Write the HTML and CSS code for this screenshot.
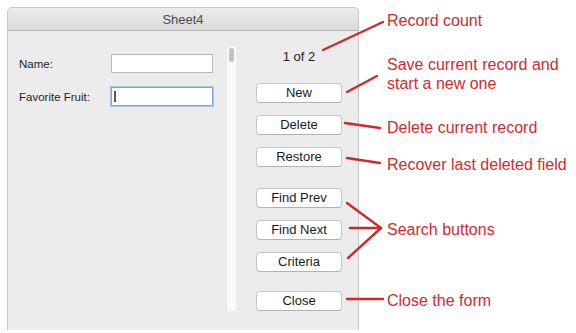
FILE: index.html
```html
<!DOCTYPE html>
<html>
<head>
<meta charset="utf-8">
<link rel="stylesheet" href="styles.css">
</head>
<body>
<div class="page">
  <div class="window">
    <div class="titlebar">Sheet4</div>
    <div class="content">
      <div class="form">
        <label class="label">Name:</label>
        <div class="input"></div>
        <label class="label">Favorite Fruit:</label>
        <div class="input focused"><span class="caret"></span></div>
      </div>
      <div class="scroll"><div class="thumb"></div></div>
      <div class="actions">
        <div class="count">1 of 2</div>
        <div class="group first">
          <div class="btn">New</div>
          <div class="btn">Delete</div>
          <div class="btn">Restore</div>
        </div>
        <div class="group">
          <div class="btn">Find Prev</div>
          <div class="btn">Find Next</div>
          <div class="btn">Criteria</div>
        </div>
        <div class="group last">
          <div class="btn">Close</div>
        </div>
      </div>
    </div>
  </div>

  <svg class="arrows" width="576" height="333" viewBox="0 0 576 333">
    <g stroke="#cf2a2a" stroke-width="2.4" stroke-linecap="round" fill="none">
      <line x1="323" y1="50" x2="383" y2="22"/>
      <line x1="347" y1="92" x2="377" y2="76"/>
      <line x1="345" y1="123" x2="380" y2="128"/>
      <line x1="347" y1="158" x2="380" y2="163"/>
      <line x1="347" y1="203" x2="381" y2="228"/>
      <line x1="350" y1="228" x2="381" y2="228"/>
      <line x1="348" y1="258" x2="381" y2="228"/>
      <line x1="347" y1="299" x2="383" y2="299"/>
    </g>
  </svg>

  <div class="note n1">Record count</div>
  <div class="note n2">Save current record and<br>start a new one</div>
  <div class="note n3">Delete current record</div>
  <div class="note n4">Recover last deleted field</div>
  <div class="note n5">Search buttons</div>
  <div class="note n6">Close the form</div>
</div>
</body>
</html>
```

FILE: styles.css
```css
html, body {
  margin: 0;
  padding: 0;
  background: #ffffff;
}
.page {
  position: relative;
  width: 576px;
  height: 333px;
  overflow: hidden;
  font-family: "Liberation Sans", Arial, sans-serif;
}
.window {
  margin: 7px 0 0 7px;
  width: 352px;
  height: 323px;
  box-sizing: border-box;
  border: 1px solid #c8c8c8;
  border-bottom: none;
  border-radius: 5px 5px 0 0;
  background: #ececec;
  display: flex;
  flex-direction: column;
  overflow: hidden;
}
.titlebar {
  height: 21px;
  flex: none;
  border-bottom: 1px solid #b7b7b7;
  background: linear-gradient(#ececec, #dadada);
  display: flex;
  align-items: center;
  justify-content: center;
  font-size: 13px;
  color: #4c4c4c;
  padding-top: 1px;
  box-sizing: content-box;
}
.content {
  flex: 1;
  display: flex;
}
.form {
  width: 207px;
  padding: 23px 0 0 11px;
  display: grid;
  grid-template-columns: 92px 102px;
  grid-auto-rows: 19px;
  row-gap: 14px;
  align-content: start;
  align-items: center;
}
.label {
  font-size: 11.5px;
  color: #1e1e1e;
}
.input {
  height: 19px;
  box-sizing: border-box;
  border: 1px solid #b9b9b9;
  background: #ffffff;
  position: relative;
}
.input.focused {
  border: 1px solid #7fa6dc;
  box-shadow: 0 0 0 1px #a9c5ec;
}
.caret {
  position: absolute;
  left: 2px;
  top: 3px;
  width: 2px;
  height: 11px;
  background: #5a5a5a;
}
.scroll {
  width: 10px;
  height: 264px;
  margin-top: 16px;
  background: #f9f9f9;
  border-left: 1px solid #e6e6e6;
  box-sizing: border-box;
}
.thumb {
  width: 5px;
  height: 14px;
  margin: 1px 0 0 2px;
  border-radius: 3px;
  background: #c2c2c2;
}
.actions {
  padding: 18px 0 0 20px;
  width: 86px;
  display: flex;
  flex-direction: column;
}
.count {
  height: 16px;
  line-height: 16px;
  font-size: 13px;
  color: #1e1e1e;
  text-align: center;
}
.group {
  display: flex;
  flex-direction: column;
  gap: 12px;
  margin-top: 21px;
}
.group.first {
  margin-top: 18px;
}
.group.last {
  margin-top: 19px;
}
.btn {
  height: 20px;
  box-sizing: border-box;
  border: 1px solid #c6c6c6;
  border-bottom-color: #b2b2b2;
  border-radius: 4px;
  background: #ffffff;
  font-size: 13px;
  line-height: 18px;
  text-align: center;
  color: #1a1a1a;
}
.arrows {
  position: absolute;
  left: 0;
  top: 0;
  pointer-events: none;
}
.note {
  position: absolute;
  left: 387px;
  font-size: 16px;
  line-height: 19px;
  color: #d22b2f;
  white-space: nowrap;
}
.n1 { top: 11px; }
.n2 { top: 55px; }
.n3 { top: 118px; }
.n4 { top: 155px; }
.n5 { top: 220px; }
.n6 { top: 291px; }
```
